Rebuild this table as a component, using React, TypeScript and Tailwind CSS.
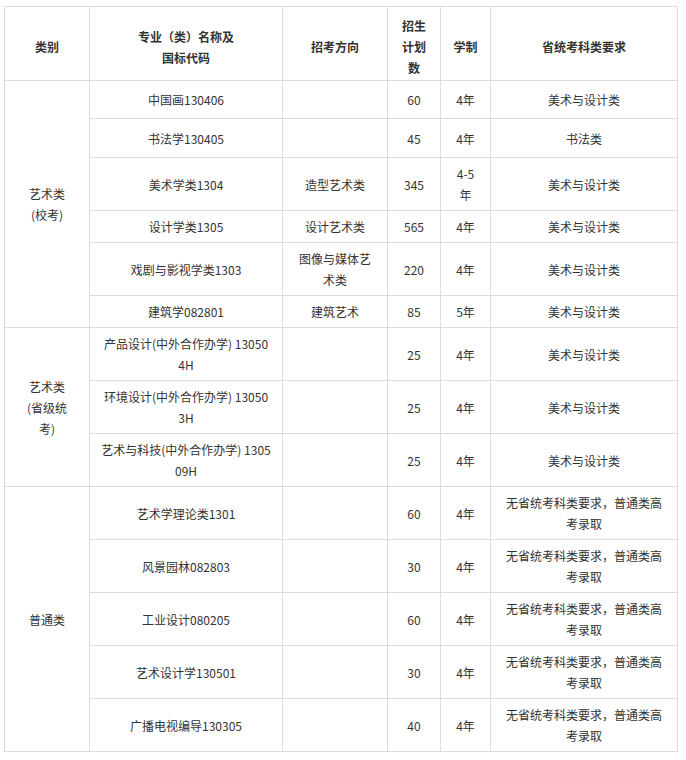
import React from "react";

type Row = {
  cat?: { text: React.ReactNode; span: number };
  name: React.ReactNode;
  dir: React.ReactNode;
  num: string;
  years: React.ReactNode;
  req: React.ReactNode;
  h: string;
};

const ptgk = (
  <>
    无省统考科类要求，普通类高
    <br />
    考录取
  </>
);

const rows: Row[] = [
  {
    cat: {
      text: (
        <>
          艺术类
          <br />
          (校考)
        </>
      ),
      span: 6,
    },
    name: "中国画130406",
    dir: "",
    num: "60",
    years: "4年",
    req: "美术与设计类",
    h: "h-[38px]",
  },
  { name: "书法学130405", dir: "", num: "45", years: "4年", req: "书法类", h: "h-[39px]" },
  {
    name: "美术学类1304",
    dir: "造型艺术类",
    num: "345",
    years: (
      <>
        4-5
        <br />年
      </>
    ),
    req: "美术与设计类",
    h: "h-[53px]",
  },
  { name: "设计学类1305", dir: "设计艺术类", num: "565", years: "4年", req: "美术与设计类", h: "h-[32px]" },
  {
    name: "戏剧与影视学类1303",
    dir: (
      <>
        图像与媒体艺
        <br />
        术类
      </>
    ),
    num: "220",
    years: "4年",
    req: "美术与设计类",
    h: "h-[53px]",
  },
  { name: "建筑学082801", dir: "建筑艺术", num: "85", years: "5年", req: "美术与设计类", h: "h-[32px]" },
  {
    cat: {
      text: (
        <>
          艺术类
          <br />
          (省级统
          <br />
          考)
        </>
      ),
      span: 3,
    },
    name: (
      <>
        产品设计(中外合作办学) 13050
        <br />
        4H
      </>
    ),
    dir: "",
    num: "25",
    years: "4年",
    req: "美术与设计类",
    h: "h-[53px]",
  },
  {
    name: (
      <>
        环境设计(中外合作办学) 13050
        <br />
        3H
      </>
    ),
    dir: "",
    num: "25",
    years: "4年",
    req: "美术与设计类",
    h: "h-[53px]",
  },
  {
    name: (
      <>
        艺术与科技(中外合作办学) 1305
        <br />
        09H
      </>
    ),
    dir: "",
    num: "25",
    years: "4年",
    req: "美术与设计类",
    h: "h-[53px]",
  },
  {
    cat: { text: "普通类", span: 5 },
    name: "艺术学理论类1301",
    dir: "",
    num: "60",
    years: "4年",
    req: ptgk,
    h: "h-[53px]",
  },
  { name: "风景园林082803", dir: "", num: "30", years: "4年", req: ptgk, h: "h-[53px]" },
  { name: "工业设计080205", dir: "", num: "60", years: "4年", req: ptgk, h: "h-[53px]" },
  { name: "艺术设计学130501", dir: "", num: "30", years: "4年", req: ptgk, h: "h-[53px]" },
  { name: "广播电视编导130305", dir: "", num: "40", years: "4年", req: ptgk, h: "h-[53px]" },
];

const td = "border border-[#dcdcdc] text-center align-middle px-[4px] py-0 whitespace-nowrap";

export default function App() {
  return (
    <div
      className="w-[686px] h-[760px] bg-white pt-[6px] pl-[4px] text-[12px] leading-[21px] text-[#333333]"
      style={{ fontFamily: '"Microsoft YaHei", "Noto Sans CJK SC", sans-serif' }}
    >
      <table className="border-collapse table-fixed w-[673px]">
        <colgroup>
          <col className="w-[85px]" />
          <col className="w-[193px]" />
          <col className="w-[105px]" />
          <col className="w-[53px]" />
          <col className="w-[50px]" />
          <col className="w-[187px]" />
        </colgroup>
        <thead>
          <tr className="h-[74px] font-bold">
            <td className={`${td} pt-[6px]`}>类别</td>
            <td className={`${td} pt-[6px]`}>
              专业（类）名称及
              <br />
              国标代码
            </td>
            <td className={`${td} pt-[6px]`}>招考方向</td>
            <td className={`${td} pt-[6px]`}>
              招生
              <br />
              计划
              <br />数
            </td>
            <td className={`${td} pt-[6px]`}>学制</td>
            <td className={`${td} pt-[6px]`}>省统考科类要求</td>
          </tr>
        </thead>
        <tbody>
          {rows.map((r, i) => (
            <tr key={i} className={r.h}>
              {r.cat && (
                <td className={td} rowSpan={r.cat.span}>
                  {r.cat.text}
                </td>
              )}
              <td className={td}>{r.name}</td>
              <td className={td}>{r.dir}</td>
              <td className={td}>{r.num}</td>
              <td className={td}>{r.years}</td>
              <td className={td}>{r.req}</td>
            </tr>
          ))}
        </tbody>
      </table>
    </div>
  );
}
